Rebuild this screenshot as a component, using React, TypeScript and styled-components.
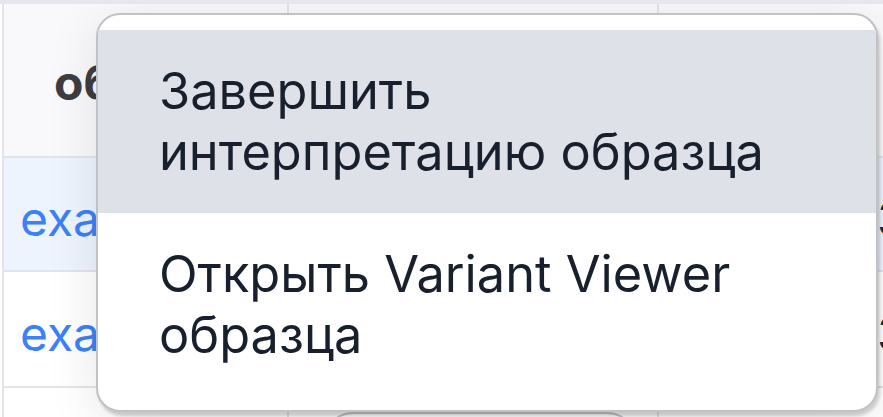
import React from "react";
import styled, { createGlobalStyle } from "styled-components";

const Global = createGlobalStyle`
  html, body { margin: 0; padding: 0; background: #ffffff; }
  body { font-family: Inter, "Noto Sans", "Liberation Sans", sans-serif; overflow: hidden; }
  #root { width: 883px; height: 417px; }
`;

const Page = styled.div`
  position: relative;
  width: 883px;
  height: 417px;
  overflow: hidden;
  background: #ffffff;
  border-top: 4px solid #e6e7ec;
  box-sizing: border-box;
`;

const Grid = styled.div`
  display: grid;
  grid-template-columns: 285px 370px 400px;
  grid-template-rows: 154px 114px 116px 60px;
  margin-left: 2px;
  border-left: 2px solid #e3e4ea;
`;

const Cell = styled.div<{ $head?: boolean; $active?: boolean }>`
  display: flex;
  align-items: center;
  box-sizing: border-box;
  padding: 0 0 0 16px;
  border-right: 2px solid #e3e4ea;
  border-bottom: 2px solid #e3e4ea;
  background: ${(p) => (p.$head ? "#f9f9fb" : p.$active ? "#edf4fe" : "#ffffff")};
  overflow: hidden;
  white-space: nowrap;
`;

const HeadText = styled.span<{ $orange?: boolean }>`
  font-size: 48px;
  font-weight: 700;
  color: ${(p) => (p.$orange ? "#f59e0b" : "#3d3d42")};
  margin-left: 34px;
  margin-top: 4px;
`;

const LinkText = styled.span`
  font-size: 48px;
  color: #3b82f6;
  margin-top: 8px;
`;

const DarkText = styled.span`
  font-size: 48px;
  color: #1f2937;
  margin-left: 202px;
  margin-top: 8px;
`;

const Pill = styled.div`
  margin: 24px 0 0 18px;
  width: 310px;
  height: 60px;
  border: 2px solid #c8c8cc;
  border-radius: 30px;
  align-self: flex-start;
`;

const Menu = styled.div`
  position: absolute;
  left: 96px;
  top: 9px;
  width: 782px;
  height: 399px;
  box-sizing: border-box;
  border: 2px solid #c2c2c4;
  border-radius: 24px;
  background: #ffffff;
  padding: 15px 0;
  display: flex;
  flex-direction: column;
  box-shadow: 2px 4px 3px rgba(0, 0, 0, 0.16), 0 10px 50px rgba(0, 0, 0, 0.1);
`;

const Item = styled.div<{ $active?: boolean }>`
  height: 183px;
  box-sizing: border-box;
  padding: 0 60px 0 61px;
  display: flex;
  align-items: center;
  background: ${(p) => (p.$active ? "#dee1e8" : "transparent")};
  color: #17202c;
  font-size: 50.5px;
  line-height: 61px;
`;

export default function App() {
  return (
    <>
      <Global />
      <Page>
        <Grid>
          <Cell $head>
            <HeadText>образец</HeadText>
          </Cell>
          <Cell $head />
          <Cell $head>
            <HeadText $orange style={{ marginLeft: 222 }}>▮</HeadText>
          </Cell>

          <Cell $active>
            <LinkText>example-1</LinkText>
          </Cell>
          <Cell $active />
          <Cell $active>
            <DarkText>3</DarkText>
          </Cell>

          <Cell>
            <LinkText>example-2</LinkText>
          </Cell>
          <Cell />
          <Cell>
            <DarkText>3</DarkText>
          </Cell>

          <Cell />
          <Cell>
            <Pill />
          </Cell>
          <Cell />
        </Grid>

        <Menu>
          <Item $active>Завершить интерпретацию образца</Item>
          <Item>Открыть Variant Viewer образца</Item>
        </Menu>
      </Page>
    </>
  );
}
